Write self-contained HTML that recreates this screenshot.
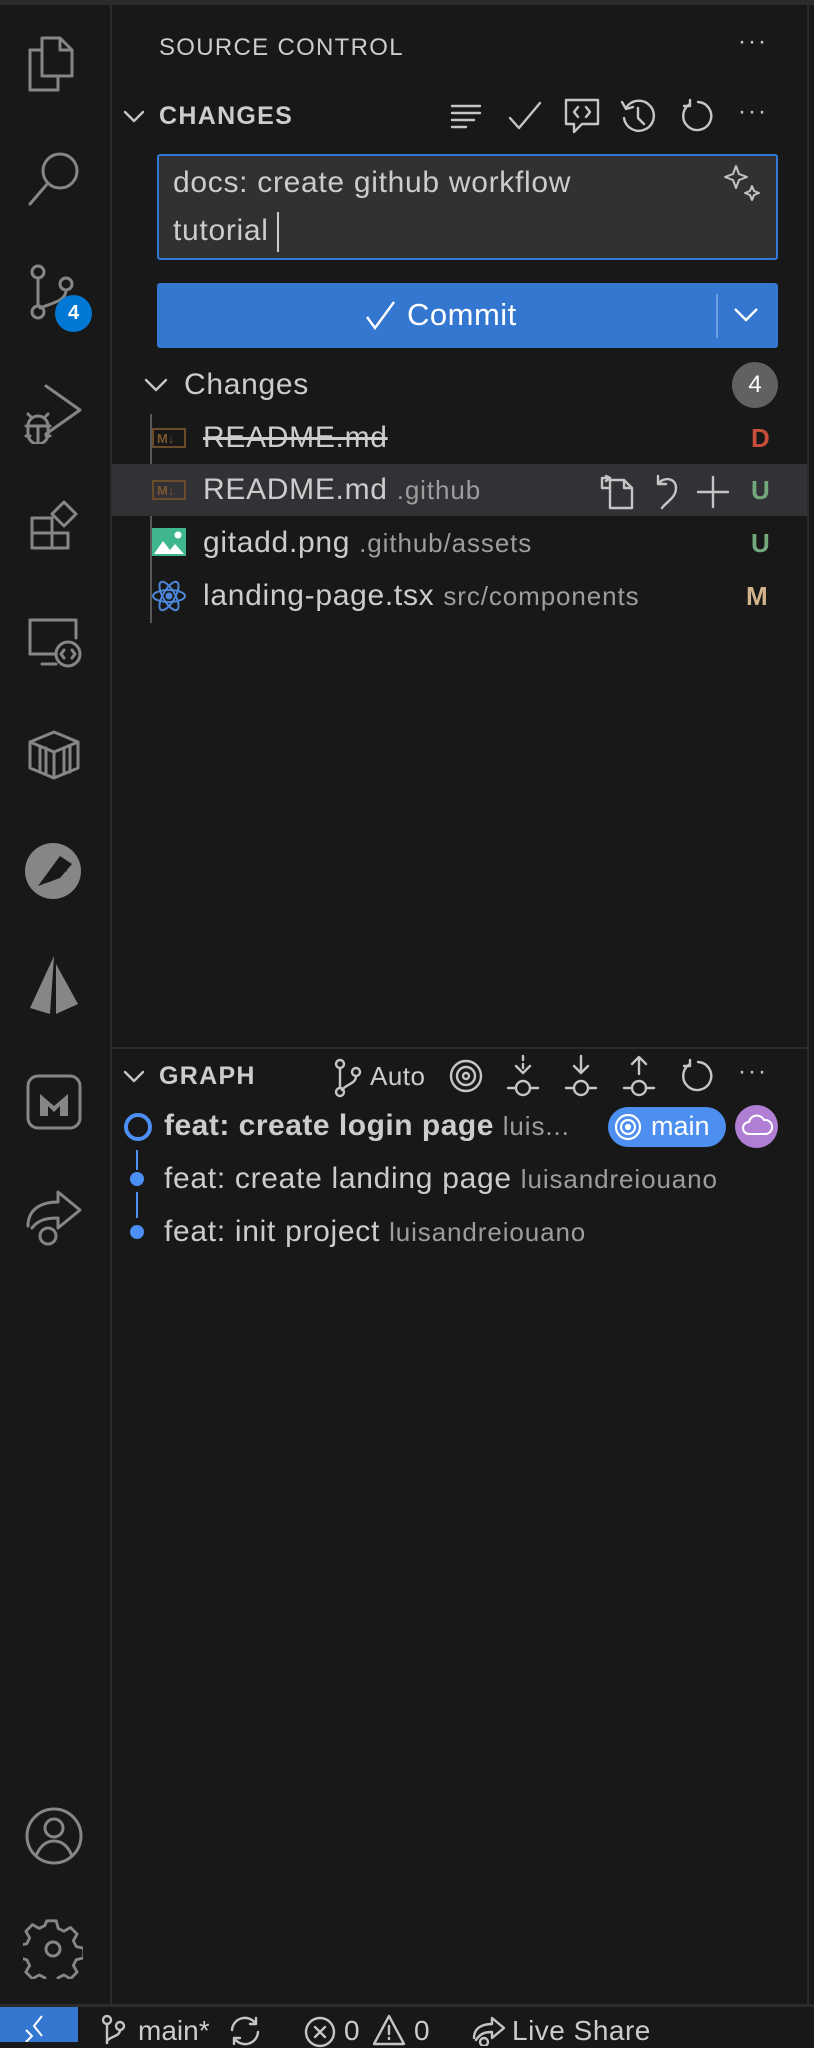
<!DOCTYPE html>
<html><head><meta charset="utf-8"><style>
*{margin:0;padding:0;box-sizing:border-box}
body{width:814px;height:2042px;background:#181818;font-family:"Liberation Sans",sans-serif;color:#cccccc;position:relative;overflow:hidden}
.abs{position:absolute}
.ic{position:absolute;fill:none;stroke:#868686;stroke-width:3;stroke-linecap:round;stroke-linejoin:round}
.ti{position:absolute;fill:none;stroke:#c5c5c5;stroke-width:2.4;stroke-linecap:round;stroke-linejoin:round}
.t{position:absolute;white-space:nowrap;line-height:1}
.f{font-size:30px;letter-spacing:0.7px}
.s{font-size:26px;letter-spacing:0.9px;color:#9d9d9d}
</style></head><body>
<div class="abs" style="left:0;top:0;width:814px;height:5px;background:#2b2b2b"></div>
<div class="abs" style="left:110px;top:5px;width:2px;height:2002px;background:#2b2b2b"></div>
<div class="abs" style="left:807px;top:5px;width:2px;height:2002px;background:#2b2b2b"></div>

<!-- activity icons -->
<svg class="ic" style="left:24px;top:34px" width="56" height="60" viewBox="0 0 56 60"><path d="M18 4h18l12 12v26H18z M36 4v12h12 M18 16H6v40h28V42"/></svg>
<svg class="ic" style="left:24px;top:148px" width="60" height="60" viewBox="0 0 60 60"><circle cx="36" cy="23" r="17"/><path d="M24 35L6 56"/></svg>
<svg class="ic" style="left:28px;top:262px" width="50" height="60" viewBox="0 0 50 60"><circle cx="10" cy="10" r="6"/><circle cx="38" cy="22" r="6"/><circle cx="10" cy="50" r="6"/><path d="M10 16v28 M38 28c0 10-10 12-26 18"/></svg>
<div class="abs" style="left:55px;top:295px;width:37px;height:37px;border-radius:50%;background:#0078d4;color:#fff;font-size:20px;font-weight:bold;text-align:center;line-height:37px">4</div>
<svg class="ic" style="left:22px;top:380px" width="64" height="64" viewBox="0 0 64 64"><path d="M24 6l34 24-34 24 M6 46a10 10 0 0 1 20 0v8a10 10 0 0 1-20 0z M4 46h24 M4 56h4 M24 56h4 M10 38l-4-4 M22 38l4-4 M16 46v16"/></svg>
<svg class="ic" style="left:26px;top:498px" width="56" height="56" viewBox="0 0 56 56"><path d="M6 20h20v30H6z M6 35h36v15H26 M26 35V20 M38 4l12 12-12 12-12-12z"/></svg>
<svg class="ic" style="left:24px;top:612px" width="60" height="58" viewBox="0 0 60 58"><path d="M30 42H6V8h46v18 M18 52h14"/><circle cx="44" cy="42" r="12"/><path d="M40 38l-3 4 3 4 M48 38l3 4-3 4"/></svg>
<svg class="ic" style="left:24px;top:726px" width="60" height="56" viewBox="0 0 60 56"><path d="M6 16l24-10 24 10v26L30 52 6 42z M6 16l24 10 24-10 M30 26v26 M16 20v26 M22 22v26 M40 22v26 M46 20v26"/></svg>
<svg style="position:absolute;left:24px;top:842px" width="60" height="58" viewBox="0 0 60 58"><circle cx="29" cy="29" r="28" fill="#868686"/><path d="M14 44L36 14 L48 22 L36 36z" fill="#181818"/><path d="M36 22a6 6 0 0 1 10 0 l-4 8z" fill="#181818"/></svg>
<svg style="position:absolute;left:28px;top:954px" width="52" height="62" viewBox="0 0 52 62"><path d="M26 2L2 54l20 6z" fill="#868686"/><path d="M28 10l22 40-22 10z" fill="#868686"/></svg>
<svg class="ic" style="left:24px;top:1072px" width="60" height="60" viewBox="0 0 60 60"><rect x="4" y="4" width="52" height="52" rx="10"/><path d="M16 44V22l14 12 14-12v22h-8V34l-6 6-6-6v10z" fill="#868686" stroke="none"/></svg>
<svg class="ic" style="left:22px;top:1186px" width="64" height="60" viewBox="0 0 64 60"><path d="M6 40c0-16 12-24 30-24V6l22 18-22 18V32c-12 0-20 2-26 10"/><circle cx="26" cy="50" r="8"/></svg>
<svg class="ic" style="left:24px;top:1806px" width="60" height="60" viewBox="0 0 60 60"><circle cx="30" cy="30" r="27"/><circle cx="30" cy="22" r="9"/><path d="M12 50c4-10 10-15 18-15s14 5 18 15"/></svg>
<svg class="ic" style="left:23px;top:1919px" width="60" height="60" viewBox="0 0 60 60"><path d="M25 4h10l2 8 6 3 7-4 7 7-4 7 3 6 8 2v10l-8 2-3 6 4 7-7 7-7-4-6 3-2 8H25l-2-8-6-3-7 4-7-7 4-7-3-6-8-2V30l8-2 3-6-4-7 7-7 7 4 6-3z" transform="translate(0 -2) scale(.95)"/><circle cx="30" cy="30" r="7"/></svg>

<!-- header -->
<div class="t" style="left:159px;top:36px;font-size:24px;letter-spacing:1.3px;color:#cccccc">SOURCE CONTROL</div>
<div class="t" style="left:738px;top:30px;font-size:24px;letter-spacing:2px">···</div>

<svg class="ti" style="left:122px;top:106px" width="24" height="20" viewBox="0 0 24 20"><path d="M3 6l9 9 9-9"/></svg>
<div class="t" style="left:159px;top:104px;font-size:25px;font-weight:bold;letter-spacing:1.3px">CHANGES</div>
<svg class="ti" style="left:450px;top:102px" width="32" height="30" viewBox="0 0 32 30"><path d="M2 4h28 M2 11h28 M2 18h22 M2 25h14"/></svg>
<svg class="ti" style="left:508px;top:100px" width="34" height="32" viewBox="0 0 34 32"><path d="M2 18l9 10L32 3"/></svg>
<svg class="ti" style="left:564px;top:98px" width="36" height="38" viewBox="0 0 36 38"><path d="M2 2h32v24H18l-8 8v-8H2z M14 9l-4 5 4 5 M22 9l4 5-4 5"/></svg>
<svg class="ti" style="left:620px;top:98px" width="36" height="38" viewBox="0 0 36 38"><path d="M6 10a15 15 0 1 1-2 10 M2 4l4 7 7-2 M18 10v10l6 6"/></svg>
<svg class="ti" style="left:680px;top:98px" width="34" height="38" viewBox="0 0 34 38"><path d="M10 6a14 14 0 1 0 8-2 M10 2v6h-6"/></svg>
<div class="t" style="left:738px;top:100px;font-size:24px;letter-spacing:2px">···</div>

<!-- input -->
<div class="abs" style="left:157px;top:154px;width:621px;height:106px;background:#313131;border:2px solid #2f7ad6;border-radius:3px"></div>
<div class="t f" style="left:173px;top:168px;color:#cccccc">docs: create github workflow</div>
<div class="t f" style="left:173px;top:216px;color:#cccccc">tutorial</div>
<div class="abs" style="left:277px;top:212px;width:2px;height:40px;background:#cccccc"></div>
<svg class="ti" style="left:722px;top:164px" width="40" height="40" viewBox="0 0 40 40"><path d="M14 2l3 8 8 3-8 3-3 8-3-8-8-3 8-3z M30 22l2 5 5 2-5 2-2 5-2-5-5-2 5-2z" stroke-width="2"/></svg>

<!-- commit -->
<div class="abs" style="left:157px;top:283px;width:621px;height:65px;background:#3477d1;border-radius:3px"></div>
<svg class="abs" style="left:364px;top:299px" width="32" height="32" viewBox="0 0 32 32"><path d="M3 18l8 11L30 3" fill="none" stroke="#fff" stroke-width="2.4"/></svg>
<div class="t" style="left:407px;top:299px;font-size:31px;letter-spacing:0.5px;color:#fff">Commit</div>
<div class="abs" style="left:716px;top:294px;width:2px;height:44px;background:#6ea2e4"></div>
<svg class="abs" style="left:733px;top:304px" width="26" height="20" viewBox="0 0 26 20"><path d="M2 5l11 11L24 5" fill="none" stroke="#fff" stroke-width="2.4"/></svg>

<!-- Changes list -->
<svg class="ti" style="left:143px;top:375px" width="26" height="20" viewBox="0 0 26 20"><path d="M3 5l10 10 10-10"/></svg>
<div class="t f" style="left:184px;top:370px">Changes</div>
<div class="abs" style="left:732px;top:362px;width:46px;height:46px;border-radius:50%;background:#616161;color:#fff;font-size:24px;text-align:center;line-height:46px">4</div>
<div class="abs" style="left:150px;top:414px;width:2px;height:209px;background:#585858"></div>

<div class="abs" style="left:112px;top:464px;width:695px;height:52px;background:#323236"></div>

<svg class="abs" style="left:152px;top:428px" width="34" height="20" viewBox="0 0 34 20"><rect x="1" y="1" width="32" height="18" fill="none" stroke="#6a4b2a" stroke-width="2"/><text x="5" y="15" font-size="13" font-weight="bold" fill="#7a5630" font-family="Liberation Sans">M↓</text></svg>
<div class="t f" style="left:203px;top:423px;color:#cccccc;text-decoration:line-through">README.md</div>
<div class="t" style="left:751px;top:425px;font-size:26px;font-weight:bold;color:#c74e39">D</div>

<svg class="abs" style="left:152px;top:480px" width="34" height="20" viewBox="0 0 34 20"><rect x="1" y="1" width="32" height="18" fill="none" stroke="#6a4b2a" stroke-width="2"/><text x="5" y="15" font-size="13" font-weight="bold" fill="#7a5630" font-family="Liberation Sans">M↓</text></svg>
<div class="t f" style="left:203px;top:475px;color:#cccccc">README.md <span class="s">.github</span></div>
<svg class="ti" style="left:598px;top:474px" width="40" height="36" viewBox="0 0 40 36"><path d="M12 6h14l8 8v20H12z M26 6v8h8 M12 14H4V4h8 M8 2l4 2-4 3"/></svg>
<svg class="ti" style="left:652px;top:474px" width="28" height="36" viewBox="0 0 28 36"><path d="M6 10c6-8 18-6 18 4 0 10-10 14-14 20 M6 2v8h8"/></svg>
<svg class="ti" style="left:696px;top:475px" width="34" height="34" viewBox="0 0 34 34"><path d="M17 2v30 M2 17h30"/></svg>
<div class="t" style="left:751px;top:477px;font-size:26px;font-weight:bold;color:#73a87d">U</div>

<svg class="abs" style="left:152px;top:528px" width="34" height="28" viewBox="0 0 34 28"><rect x="0" y="0" width="34" height="28" fill="#3fb68b"/><path d="M2 26l9-13 7 9 5-6 9 10z" fill="#fff"/><circle cx="26" cy="7" r="3.5" fill="#fff"/></svg>
<div class="t f" style="left:203px;top:528px;color:#cccccc">gitadd.png <span class="s">.github/assets</span></div>
<div class="t" style="left:751px;top:530px;font-size:26px;font-weight:bold;color:#73a87d">U</div>

<svg class="abs" style="left:151px;top:578px" width="36" height="36" viewBox="0 0 36 36" fill="none" stroke="#4d86d8" stroke-width="2"><ellipse cx="18" cy="18" rx="16" ry="6"/><ellipse cx="18" cy="18" rx="16" ry="6" transform="rotate(60 18 18)"/><ellipse cx="18" cy="18" rx="16" ry="6" transform="rotate(120 18 18)"/><circle cx="18" cy="18" r="2.5" fill="#4d86d8"/></svg>
<div class="t f" style="left:203px;top:581px;color:#cccccc">landing-page.tsx <span class="s">src/components</span></div>
<div class="t" style="left:746px;top:583px;font-size:26px;font-weight:bold;color:#d1b38a">M</div>

<!-- graph -->
<div class="abs" style="left:112px;top:1047px;width:695px;height:2px;background:#2b2b2b"></div>
<svg class="ti" style="left:122px;top:1066px" width="24" height="20" viewBox="0 0 24 20"><path d="M3 6l9 9 9-9"/></svg>
<div class="t" style="left:159px;top:1064px;font-size:25px;font-weight:bold;letter-spacing:1.3px">GRAPH</div>
<svg class="ti" style="left:333px;top:1058px" width="30" height="40" viewBox="0 0 30 40"><circle cx="7" cy="6" r="4"/><circle cx="7" cy="34" r="4"/><circle cx="23" cy="14" r="4"/><path d="M7 10v20 M23 18c0 8-10 8-14 14"/></svg>
<div class="t" style="left:370px;top:1063px;font-size:26px;letter-spacing:0.5px">Auto</div>
<svg class="ti" style="left:448px;top:1058px" width="36" height="36" viewBox="0 0 36 36"><circle cx="18" cy="18" r="15"/><circle cx="18" cy="18" r="9"/><circle cx="18" cy="18" r="3"/></svg>
<svg class="ti" style="left:506px;top:1054px" width="34" height="44" viewBox="0 0 34 44"><path d="M17 2v4 M17 10v4 M10 12l7 7 7-7 M2 34h8 M24 34h8"/><circle cx="17" cy="34" r="7"/></svg>
<svg class="ti" style="left:564px;top:1054px" width="34" height="44" viewBox="0 0 34 44"><path d="M17 2v16 M10 12l7 7 7-7 M2 34h8 M24 34h8"/><circle cx="17" cy="34" r="7"/></svg>
<svg class="ti" style="left:622px;top:1054px" width="34" height="44" viewBox="0 0 34 44"><path d="M17 20V4 M10 10l7-7 7 7 M2 34h8 M24 34h8"/><circle cx="17" cy="34" r="7"/></svg>
<svg class="ti" style="left:680px;top:1058px" width="34" height="38" viewBox="0 0 34 38"><path d="M10 6a14 14 0 1 0 8-2 M10 2v6h-6"/></svg>
<div class="t" style="left:738px;top:1060px;font-size:24px;letter-spacing:2px">···</div>

<div class="abs" style="left:124px;top:1113px;width:28px;height:28px;border-radius:50%;border:4px solid #4c8ff5"></div>
<div class="abs" style="left:136px;top:1150px;width:2px;height:20px;background:#4c8ff5"></div>
<div class="abs" style="left:130px;top:1172px;width:14px;height:14px;border-radius:50%;background:#4c8ff5"></div>
<div class="abs" style="left:136px;top:1192px;width:2px;height:26px;background:#4c8ff5"></div>
<div class="abs" style="left:130px;top:1225px;width:14px;height:14px;border-radius:50%;background:#4c8ff5"></div>

<div class="t" style="left:164px;top:1111px;font-size:30px;letter-spacing:0.5px;font-weight:bold;color:#cccccc">feat: create login page <span class="s" style="font-weight:normal">luis...</span></div>
<div class="abs" style="left:608px;top:1107px;width:118px;height:40px;border-radius:20px;background:#4d8ff0"></div>
<svg class="abs" style="left:614px;top:1113px" width="28" height="28" viewBox="0 0 28 28" fill="none" stroke="#fff" stroke-width="2.2"><circle cx="14" cy="14" r="12"/><circle cx="14" cy="14" r="7"/><circle cx="14" cy="14" r="2" fill="#fff"/></svg>
<div class="t" style="left:651px;top:1113px;font-size:27px;color:#fff">main</div>
<div class="abs" style="left:735px;top:1105px;width:43px;height:43px;border-radius:50%;background:#b07fd4"></div>
<svg class="abs" style="left:741px;top:1113px" width="32" height="26" viewBox="0 0 32 26"><path d="M8 21a6 6 0 0 1 0-12 8 8 0 0 1 15-2 6 6 0 0 1 2 14z" fill="none" stroke="#fff" stroke-width="2"/></svg>
<div class="t f" style="left:164px;top:1164px;color:#cccccc">feat: create landing page <span class="s">luisandreiouano</span></div>
<div class="t f" style="left:164px;top:1217px;color:#cccccc">feat: init project <span class="s">luisandreiouano</span></div>

<!-- status bar -->
<div class="abs" style="left:0;top:2004px;width:814px;height:3px;background:#2b2b2b"></div>
<div class="abs" style="left:0;top:2007px;width:814px;height:35px;background:#181818"></div>
<div class="abs" style="left:0;top:2007px;width:78px;height:35px;background:#3477d1"></div>
<svg class="abs" style="left:24px;top:2014px" width="30" height="28" viewBox="0 0 30 28" fill="none" stroke="#fff" stroke-width="2"><path d="M18 2l-8 10 8 10 M2 16l6 6-6 6"/></svg>
<svg class="ti" style="left:100px;top:2014px" width="26" height="30" viewBox="0 0 26 30"><circle cx="7" cy="6" r="4"/><circle cx="20" cy="12" r="4"/><path d="M7 10v20 M20 16c0 6-8 6-12 10"/></svg>
<div class="t" style="left:138px;top:2017px;font-size:28px">main*</div>
<svg class="ti" style="left:228px;top:2016px" width="34" height="30" viewBox="0 0 34 30"><path d="M4 14a13 13 0 0 1 24-6 M30 16a13 13 0 0 1-24 6 M28 2v6h-6 M6 28v-6h6"/></svg>
<svg class="ti" style="left:304px;top:2016px" width="32" height="32" viewBox="0 0 32 32"><circle cx="16" cy="16" r="14"/><path d="M11 11l10 10 M21 11l-10 10"/></svg>
<div class="t" style="left:344px;top:2017px;font-size:28px">0</div>
<svg class="ti" style="left:372px;top:2014px" width="34" height="32" viewBox="0 0 34 32"><path d="M17 2l15 28H2z M17 12v8 M17 24v1"/></svg>
<div class="t" style="left:414px;top:2017px;font-size:28px">0</div>
<svg class="ti" style="left:470px;top:2014px" width="36" height="32" viewBox="0 0 36 32"><path d="M4 24c0-10 8-14 18-14V4l12 10-12 10v-6c-8 0-12 2-16 8"/><circle cx="14" cy="28" r="4"/></svg>
<div class="t" style="left:512px;top:2017px;font-size:28px;letter-spacing:0.5px">Live Share</div>
</body></html>
